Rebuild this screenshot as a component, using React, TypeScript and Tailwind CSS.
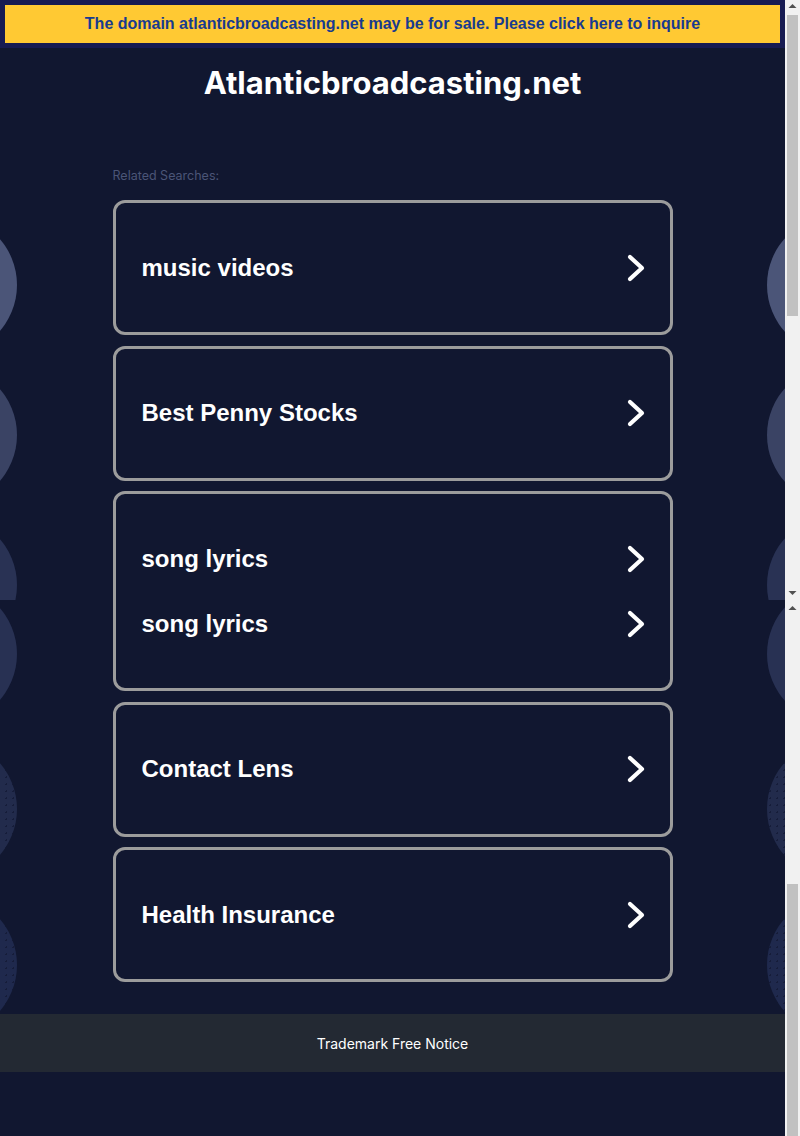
const searches: string[][] = [
  ["music videos"],
  ["Best Penny Stocks"],
  ["song lyrics", "song lyrics"],
  ["Contact Lens"],
  ["Health Insurance"],
];

type Circle = { top: number; color: string; dotted?: boolean };

const topCircles: Circle[] = [
  { top: 285, color: "#4b5578" },
  { top: 435, color: "#3a4364" },
  { top: 585, color: "#293254" },
];

const bottomCircles: Circle[] = [
  { top: 54, color: "#283153" },
  { top: 209, color: "#222b4c", dotted: true },
  { top: 365, color: "#1f294d", dotted: true },
];

function Chevron() {
  return (
    <svg width="20" height="28" viewBox="0 0 20 28" fill="none" className="-mr-[2px] shrink-0">
      <path
        d="M4 3 L16 14 L4 25"
        stroke="#ffffff"
        strokeWidth="4.2"
        strokeLinecap="round"
        strokeLinejoin="round"
      />
    </svg>
  );
}

function Bubbles({ circles }: { circles: Circle[] }) {
  return (
    <>
      {circles.map((c, i) => (
        <div key={i}>
          <div
            className={`absolute left-[-123px] h-[140px] w-[140px] rounded-full ${
              c.dotted
                ? "bg-[radial-gradient(#161d3a_1px,transparent_1px)] bg-[length:7px_7px]"
                : ""
            }`}
            style={{ top: c.top - 70, backgroundColor: c.color }}
          />
          <div
            className={`absolute left-[767px] h-[140px] w-[140px] rounded-full ${
              c.dotted
                ? "bg-[radial-gradient(#161d3a_1px,transparent_1px)] bg-[length:7px_7px]"
                : ""
            }`}
            style={{ top: c.top - 70, backgroundColor: c.color }}
          />
        </div>
      ))}
    </>
  );
}

function Arrow({ up }: { up?: boolean }) {
  return (
    <svg width="15" height="10" viewBox="0 0 15 10" className="block">
      <path d={up ? "M3.5 7 L7.5 3 L11.5 7 Z" : "M3.5 3 L7.5 7 L11.5 3 Z"} fill="#505050" />
    </svg>
  );
}

function Scrollbar() {
  return (
    <div className="flex w-[15px] shrink-0 flex-col bg-[#f1f1f1]">
      <div className="flex h-[600px] flex-col">
        <div className="h-[10px] pt-[1px]">
          <Arrow up />
        </div>
        <div className="ml-[2px] mt-[5px] h-[301px] w-[11px] bg-[#c1c1c1]" />
        <div className="flex-1" />
        <div className="h-[12px] pb-[2px]">
          <Arrow />
        </div>
      </div>
      <div className="flex flex-1 flex-col">
        <div className="h-[12px] pt-[3px]">
          <Arrow up />
        </div>
        <div className="h-[272px]" />
        <div className="ml-[2px] w-[11px] flex-1 bg-[#c1c1c1]" />
      </div>
    </div>
  );
}

export default function App() {
  return (
    <div className="flex h-[1136px] w-[800px] bg-[#111730]">
      <div className="relative w-[785px] overflow-hidden">
        <div className="absolute inset-0">
          <div className="relative h-[600px] overflow-hidden">
            <Bubbles circles={topCircles} />
          </div>
          <div className="relative h-[536px] overflow-hidden">
            <Bubbles circles={bottomCircles} />
          </div>
        </div>

        <div className="relative flex flex-col">
          <div className="bg-[#171b52] p-[5px]">
            <div className="flex h-[38px] items-center justify-center bg-[#ffc933] font-['Liberation_Sans',Arial,sans-serif] text-[16px] font-bold text-[#183b8f]">
              The domain atlanticbroadcasting.net may be for sale. Please click here to inquire
            </div>
          </div>

          <h1 className="mt-[15px] h-[40px] text-center font-['Inter',sans-serif] text-[31px] leading-[40px] font-bold text-white">
            Atlanticbroadcasting.net
          </h1>

          <div className="mx-auto mt-[65px] w-[560px]">
            <div className="h-[16px] font-['Inter',sans-serif] text-[12.5px] leading-[16px] text-[#4b5577]">
              Related Searches:
            </div>

            <div className="mt-[16px] flex flex-col gap-[10.5px]">
              {searches.map((group, i) => (
                <div
                  key={i}
                  className="rounded-[12px] border-[3px] border-[#9c9c9c] px-[26px] py-[32px]"
                >
                  {group.map((label, j) => (
                    <div
                      key={j}
                      className="flex h-[65px] items-center justify-between font-['Liberation_Sans',Arial,sans-serif] text-[24px] font-bold text-white"
                    >
                      <span>{label}</span>
                      <Chevron />
                    </div>
                  ))}
                </div>
              ))}
            </div>
          </div>

          <div className="mt-[32px] flex h-[58px] items-center justify-center bg-[#232933] font-['Inter',sans-serif] text-[14px] text-white">
            Trademark Free Notice
          </div>
        </div>
      </div>
      <Scrollbar />
    </div>
  );
}
